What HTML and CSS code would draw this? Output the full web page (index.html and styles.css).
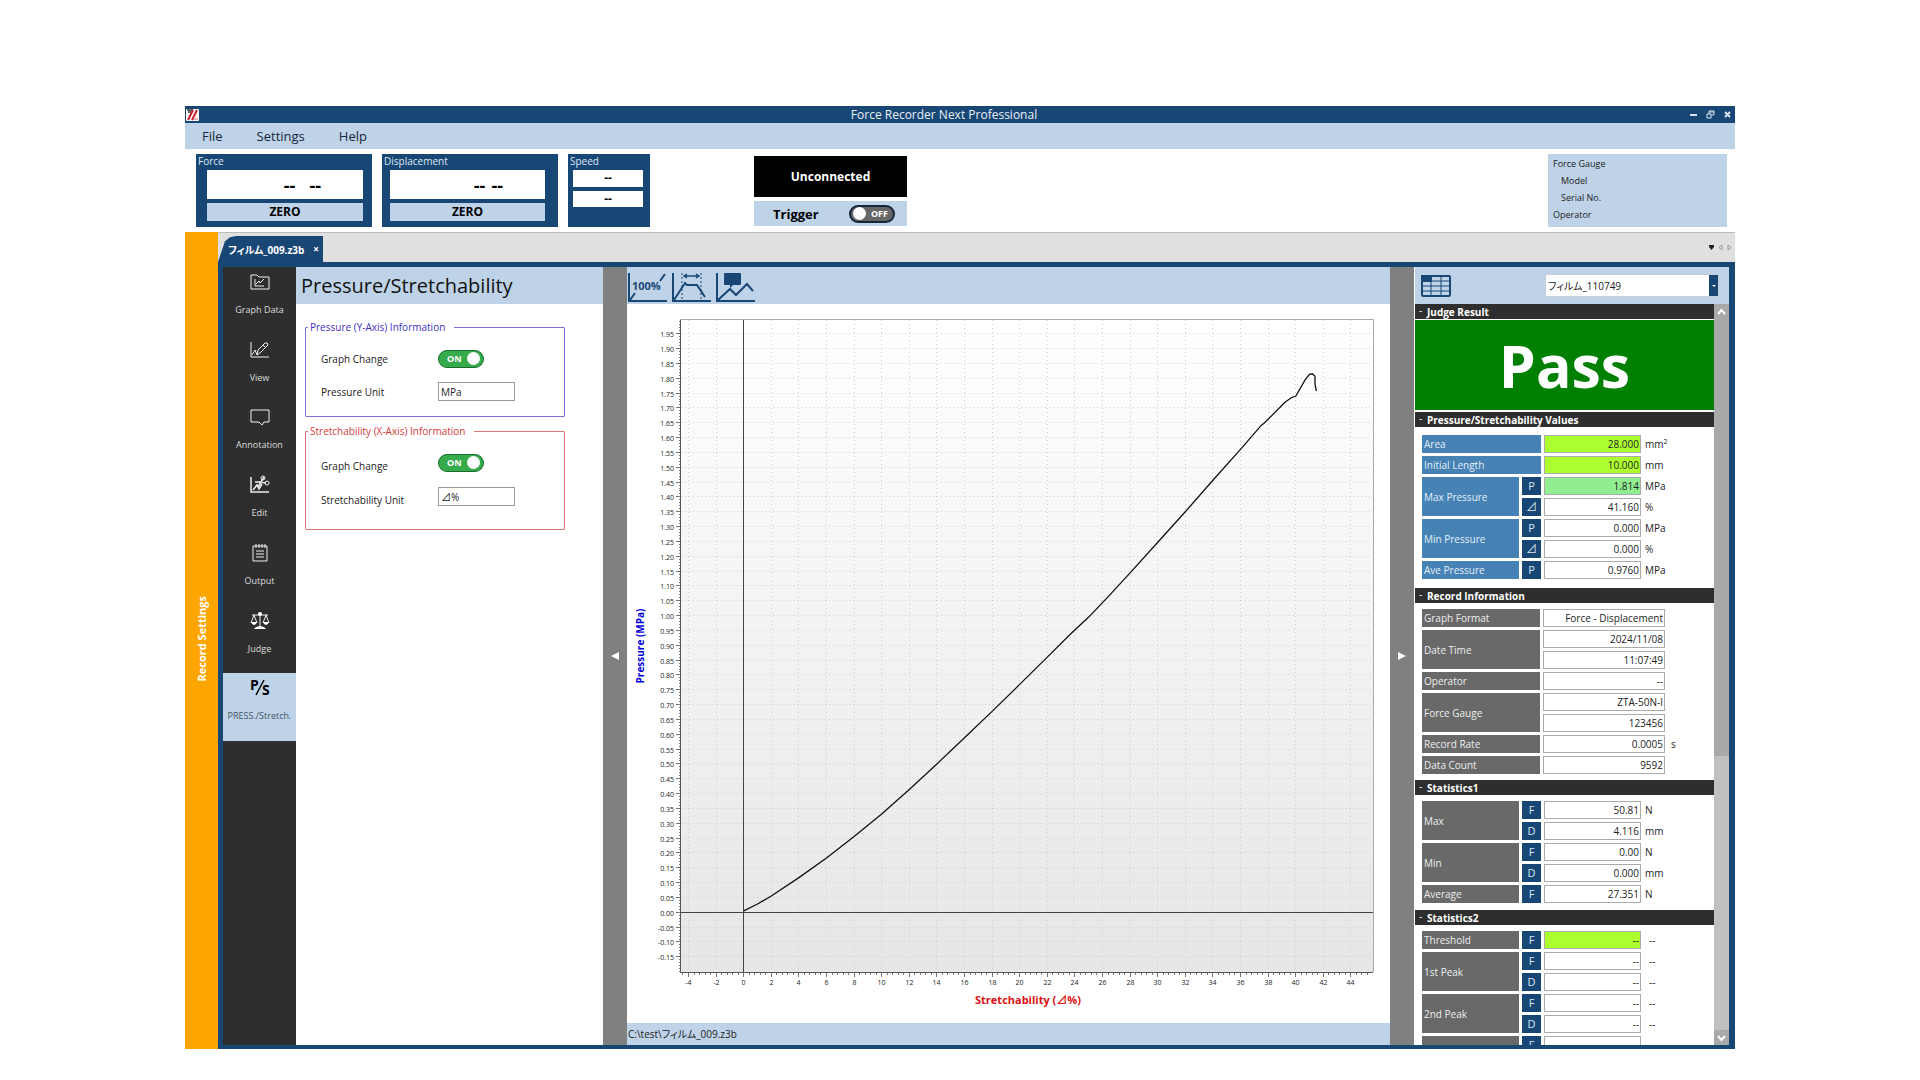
FILE: index.html
```
<!DOCTYPE html>
<html lang="en">
<head>
    <meta charset="UTF-8">
    <meta name="viewport" content="width=device-width, initial-scale=1.0">
    <title>Force Recorder Next Professional</title>
    <link rel="stylesheet" href="styles.css">
</head>
<body>
<div class="window">
    <header class="titlebar">
        <svg class="app-logo" viewBox="0 0 13 12"><rect width="13" height="12" rx="1" fill="#fff"/><path d="M1 1h6M2 3h3" stroke="#333" stroke-width="1.5"/><path d="M7 1L2 11M11 1L6 11" stroke="#c8202c" stroke-width="2"/><path d="M7 10h5" stroke="#d66" stroke-width="1"/></svg>
        <h1>Force Recorder Next Professional</h1>
        <div class="window-buttons">
            <button aria-label="Minimize"><svg viewBox="0 0 9 9"><path d="M1 5h7" stroke-width="2"/></svg></button>
            <button aria-label="Restore"><svg viewBox="0 0 9 9"><path d="M1 4h4v4H1zM3 4V1h5v4H5M3 2h5"/></svg></button>
            <button aria-label="Close"><svg viewBox="0 0 9 9"><path d="M2 2l5 5M7 2L2 7" stroke-width="2"/></svg></button>
        </div>
    </header>

    <nav class="menubar">
        <button>File</button>
        <button>Settings</button>
        <button>Help</button>
    </nav>

    <div class="meters">
        <div class="meter">
            <span class="meter-title">Force</span>
            <div class="meter-value"><span>--</span><span>--</span></div>
            <button class="zero">ZERO</button>
        </div>
        <div class="meter displacement">
            <span class="meter-title">Displacement</span>
            <div class="meter-value"><span>--</span><span>--</span></div>
            <button class="zero">ZERO</button>
        </div>
        <div class="meter speed">
            <span class="meter-title">Speed</span>
            <div class="speed-value">--</div>
            <div class="speed-value">--</div>
        </div>
        <div class="connection">
            <div class="status">Unconnected</div>
            <div class="trigger">
                <label for="trigger">Trigger</label>
                <span class="switch off"><input type="checkbox" id="trigger"><span class="knob"></span><span>OFF</span></span>
            </div>
        </div>
        <dl class="gauge">
            <dt>Force Gauge</dt>
            <dd>Model</dd>
            <dd>Serial No.</dd>
            <dt>Operator</dt>
        </dl>
    </div>

    <div class="workspace">
        <button class="record-settings"><span>Record Settings</span></button>
        <div class="document">
            <div class="tabs">
                <div class="tab"><span>フィルム_009.z3b</span><button aria-label="Close tab">×</button></div>
                <div class="tab-arrows">
                    <svg viewBox="0 0 24 8"><path d="M1 2h5v2L3.500 7 1 4z" fill="#222"/><path d="M14 2v5l-3-2.500zM20 2v5l3-2.500z" fill="none" stroke="#999"/></svg>
                </div>
            </div>

            <div class="panes">
                <nav class="sidebar">
                    <button>
                        <svg viewBox="0 0 20 20"><path d="M1 17V3h6l2 2h10v12z"/><path d="M5 7v7h9M6 12l3-3 1 2 4-4"/></svg>
                        <span>Graph Data</span>
                    </button>
                    <button>
                        <svg viewBox="0 0 20 20"><path d="M1 2v15h18M2 15l3-5 2 5M7 15l1-5 7-7q3-1 3 2l-7 7zM13 5l3 3"/></svg>
                        <span>View</span>
                    </button>
                    <button>
                        <svg viewBox="0 0 20 20"><path d="M1 3h18v12h-5l-2 3-3-3H1z"/></svg>
                        <span>Annotation</span>
                    </button>
                    <button>
                        <svg viewBox="0 0 20 20"><path d="M1 2v15h18M3 15l4-5 2 4 3-5M5 7h5l6 1M8 12l6-10" stroke-width="1.5"/><circle cx="13" cy="3" r="2"/><circle cx="17" cy="8" r="2"/></svg>
                        <span>Edit</span>
                    </button>
                    <button>
                        <svg viewBox="0 0 20 20"><path d="M3 3h14v15H3zM6 1v4M9 1v4M12 1v4M15 1v4M6 8h8M6 11h8M6 14h8"/></svg>
                        <span>Output</span>
                    </button>
                    <button>
                        <svg viewBox="0 0 20 20"><path d="M10 1v15M2 4h16M4 4l-3 8M4 4l3 8M16 4l-3 8M16 4l3 8"/><path d="M1 11h6q-1 3-3 3t-3-3zM13 11h6q-1 3-3 3t-3-3zM4 18q1-2 6-3 5 1 6 3z" fill="#fff" stroke="none"/><circle cx="10" cy="3" r="2" fill="#fff" stroke="none"/></svg>
                        <span>Judge</span>
                    </button>
                    <button class="active">
                        <svg viewBox="0 0 20 20"><text x="0" y="12">P</text><text x="12" y="17">S</text><path d="M14 2L6 17"/></svg>
                        <span>PRESS./Stretch.</span>
                    </button>
                </nav>

                <section class="settings">
                    <h2>Pressure/Stretchability</h2>
                    <div class="groups">
                        <fieldset class="pressure">
                            <legend>Pressure (Y-Axis) Information</legend>
                            <div class="field">
                                <label for="pChange">Graph Change</label>
                                <span class="switch"><input type="checkbox" id="pChange" checked><span>ON</span><span class="knob"></span></span>
                            </div>
                            <div class="field">
                                <label for="pUnit">Pressure Unit</label>
                                <input type="text" id="pUnit" value="MPa">
                            </div>
                        </fieldset>
                        <fieldset class="stretch">
                            <legend>Stretchability (X-Axis) Information</legend>
                            <div class="field">
                                <label for="sChange">Graph Change</label>
                                <span class="switch"><input type="checkbox" id="sChange" checked><span>ON</span><span class="knob"></span></span>
                            </div>
                            <div class="field">
                                <label for="sUnit">Stretchability Unit</label>
                                <input type="text" id="sUnit" value="⊿%">
                            </div>
                        </fieldset>
                    </div>
                </section>

                <button class="splitter" aria-label="Collapse settings"><svg viewBox="0 0 8 8"><path d="M8 0v8L0 4z"/></svg></button>

                <section class="graph">
                    <div class="graph-tools">
                        <button aria-label="Full scale">
                            <svg viewBox="0 0 40 31"><path d="M2 1v28h38M3 28l5-7M33 9l5-7"/><text x="5" y="18">100%</text></svg>
                        </button>
                        <button aria-label="Range">
                            <svg viewBox="0 0 40 31"><path d="M2 1v28h38M3 28L14 11l2 2h10l8 12"/><path d="M11 1v27M30 1v27" stroke-width="1" stroke-dasharray="2 2"/><path d="M13 4h15M16 2l-3 2 3 2M25 2l3 2-3 2" stroke-width="1.500"/></svg>
                        </button>
                        <button aria-label="Comment">
                            <svg viewBox="0 0 40 31"><path d="M2 1v28h38M3 28l12-11 6 6 11-11 6 7"/><path d="M10 1h15q1 0 1 1v10q0 1-1 1h-7l-3 3v-3h-5q-1 0-1-1V2q0-1 1-1z" fill="#194775" stroke="none"/></svg>
                        </button>
                    </div>
                    <svg class="chart" id="chart" viewBox="0 0 763 719">
                        <defs>
                            <linearGradient id="plotFill" x1="0" y1="0" x2="0" y2="1">
                                <stop offset="0" stop-color="#ffffff"/>
                                <stop offset="1" stop-color="#e6e6e6"/>
                            </linearGradient>
                        </defs>
                        <rect x="54" y="16" width="692" height="652" fill="url(#plotFill)"/>
                        <path id="gridLines" class="grid-lines"/>
                        <path class="frame" d="M54 15.500h692.500V668"/>
                        <path id="ticks" class="ticks"/>
                        <path class="axis" d="M53.500 15.500V668.500H746"/>
                        <path class="zero-line" d="M116.500 16V668M54 608.500H746"/>
                        <path id="curve" class="curve"/>
                        <g id="tickLabels" class="tick-labels"></g>
                        <text class="y-title" text-anchor="middle" transform="translate(17 342) rotate(-90)">Pressure (MPa)</text>
                        <text class="x-title" text-anchor="middle" x="401" y="700">Stretchability (⊿%)</text>
                    </svg>
                    <div class="path">C:\test\フィルム_009.z3b</div>
                </section>

                <button class="splitter" aria-label="Collapse results"><svg viewBox="0 0 8 8"><path d="M0 0v8l8-4z"/></svg></button>

                <aside class="results">
                    <div class="results-head">
                        <button class="table-button" aria-label="Table"><svg viewBox="0 0 30 22"><rect x="1" y="1" width="28" height="20" rx="1"/><path d="M1 6h28M1 11h28M1 16h28M10 1v20M20 1v20" stroke-width="1"/><path d="M1 1h9v5H1z" fill="#194775"/></svg></button>
                        <div class="combo">
                            <select aria-label="Record"><option>フィルム_110749</option></select>
                            <span class="combo-arrow"></span>
                        </div>
                    </div>
                    <div class="results-body">
                        <div class="sections">
                            <h3>Judge Result</h3>
                            <div class="judge">Pass</div>

                            <h3>Pressure/Stretchability Values</h3>
                            <table class="blue">
                                <tr><th colspan="2">Area</th><td class="lime">28.000</td><td class="unit">mm<sup>2</sup></td></tr>
                                <tr><th colspan="2">Initial Length</th><td class="lime">10.000</td><td class="unit">mm</td></tr>
                                <tr><th rowspan="2">Max Pressure</th><td class="key">P</td><td class="mint">1.814</td><td class="unit">MPa</td></tr>
                                <tr><td class="key">⊿</td><td>41.160</td><td class="unit">%</td></tr>
                                <tr><th rowspan="2">Min Pressure</th><td class="key">P</td><td>0.000</td><td class="unit">MPa</td></tr>
                                <tr><td class="key">⊿</td><td>0.000</td><td class="unit">%</td></tr>
                                <tr><th>Ave Pressure</th><td class="key">P</td><td>0.9760</td><td class="unit">MPa</td></tr>
                            </table>

                            <h3>Record Information</h3>
                            <table class="record">
                                <tr><th>Graph Format</th><td>Force - Displacement</td><td class="unit"></td></tr>
                                <tr><th rowspan="2">Date Time</th><td>2024/11/08</td><td class="unit"></td></tr>
                                <tr><td>11:07:49</td><td class="unit"></td></tr>
                                <tr><th>Operator</th><td>--</td><td class="unit"></td></tr>
                                <tr><th rowspan="2">Force Gauge</th><td>ZTA-50N-I</td><td class="unit"></td></tr>
                                <tr><td>123456</td><td class="unit"></td></tr>
                                <tr><th>Record Rate</th><td>0.0005</td><td class="unit">s</td></tr>
                                <tr><th>Data Count</th><td>9592</td><td class="unit"></td></tr>
                            </table>

                            <h3>Statistics1</h3>
                            <table>
                                <tr><th rowspan="2">Max</th><td class="key">F</td><td>50.81</td><td class="unit">N</td></tr>
                                <tr><td class="key">D</td><td>4.116</td><td class="unit">mm</td></tr>
                                <tr><th rowspan="2">Min</th><td class="key">F</td><td>0.00</td><td class="unit">N</td></tr>
                                <tr><td class="key">D</td><td>0.000</td><td class="unit">mm</td></tr>
                                <tr><th>Average</th><td class="key">F</td><td>27.351</td><td class="unit">N</td></tr>
                            </table>

                            <h3>Statistics2</h3>
                            <table class="peaks">
                                <tr><th>Threshold</th><td class="key">F</td><td class="lime">--</td><td class="unit">--</td></tr>
                                <tr><th rowspan="2">1st Peak</th><td class="key">F</td><td>--</td><td class="unit">--</td></tr>
                                <tr><td class="key">D</td><td>--</td><td class="unit">--</td></tr>
                                <tr><th rowspan="2">2nd Peak</th><td class="key">F</td><td>--</td><td class="unit">--</td></tr>
                                <tr><td class="key">D</td><td>--</td><td class="unit">--</td></tr>
                                <tr><th></th><td class="key">F</td><td></td><td class="unit"></td></tr>
                            </table>
                        </div>
                        <div class="scrollbar">
                            <button aria-label="Scroll up"><svg viewBox="0 0 9 8"><path d="M1 6l3.500-4L8 6"/></svg></button>
                            <div class="thumb"></div>
                            <button aria-label="Scroll down"><svg viewBox="0 0 9 8"><path d="M1 2l3.500 4L8 2"/></svg></button>
                        </div>
                    </div>
                </aside>
            </div>
        </div>
    </div>
</div>
<script src="script.js"></script>
</body>
</html>
```
FILE: styles.css
```
* {
    box-sizing: border-box;
}
body {
    margin: 0;
    padding: 106px 185px 31px;
    background: #ffffff;
    color: #222;
    font-family: "Open Sans", "Noto Sans CJK JP", sans-serif;
    font-size: 10px;
    font-feature-settings: "palt";
}
button, input, select {
    font: inherit;
    font-feature-settings: inherit;
    color: inherit;
    border: none;
    padding: 0;
    margin: 0;
    background: none;
}
h1, h2, h3, dl, dd, fieldset {
    margin: 0;
    padding: 0;
}
svg {
    display: block;
    fill: none;
}
.window {
    display: flex;
    flex-direction: column;
    height: calc(100vh - 137px);
}

/* title + menu */
.titlebar {
    display: grid;
    grid-template-columns: 14px 1fr 46px;
    align-items: center;
    height: 17px;
    background: #194775;
    color: #e8f0f8;
}
.app-logo {
    width: 13px;
    height: 12px;
    margin-left: 1px;
}
.titlebar h1 {
    font-size: 12px;
    font-weight: normal;
    line-height: 17px;
    text-align: center;
}
.window-buttons {
    display: flex;
    justify-content: flex-end;
    gap: 8px;
    padding-right: 3px;
}
.window-buttons svg {
    width: 9px;
    height: 9px;
    stroke: #d5e2ef;
}
.menubar {
    display: flex;
    gap: 34px;
    height: 26px;
    padding-left: 17px;
    background: #bfd3e8;
    font-size: 13px;
    color: #16263a;
}

/* meters */
.meters {
    display: flex;
    gap: 10px;
    height: 83px;
    padding: 5px 8px 5px 11px;
}
.meter {
    display: flex;
    flex-direction: column;
    gap: 4px;
    width: 176px;
    padding: 0 9px 6px 11px;
    background: #194775;
}
.meter-title {
    height: 12px;
    margin-left: -9px;
    line-height: 15px;
    color: #dce8f4;
}
.meter-value {
    display: flex;
    gap: 14px;
    justify-content: flex-end;
    align-items: center;
    flex: 1;
    padding-right: 42px;
    background: #fff;
    color: #000;
    font-size: 18px;
    font-weight: bold;
    line-height: 20px;
}
.displacement {
    padding: 0 13px 6px 8px;
}
.displacement .meter-title {
    margin-left: -6px;
}
.displacement .meter-value {
    gap: 6px;
}
.zero {
    height: 18px;
    background: #bfd3e8;
    color: #000;
    font-size: 12px;
    font-weight: bold;
    line-height: 18px;
}
.speed {
    width: 82px;
    padding: 0 7px 20px 5px;
}
.speed .meter-title {
    margin-left: -3px;
}
.speed-value {
    flex: 1;
    background: #fff;
    color: #000;
    font-size: 12px;
    font-weight: bold;
    line-height: 15px;
    text-align: center;
}
.connection {
    display: flex;
    flex-direction: column;
    gap: 4px;
    width: 153px;
    margin-left: 94px;
    padding-top: 2px;
    font-weight: bold;
}
.status {
    height: 41px;
    background: #000;
    color: #fff;
    font-size: 12px;
    line-height: 42px;
    text-align: center;
}
.trigger {
    display: flex;
    justify-content: space-between;
    align-items: center;
    height: 25px;
    padding: 0 12px 0 19px;
    background: #bfd3e8;
    color: #000;
    font-size: 13px;
}
.switch {
    position: relative;
    display: flex;
    justify-content: space-between;
    align-items: center;
    width: 46px;
    height: 18px;
    padding: 0 3px 0 8px;
    border: 1px solid #1c6b34;
    border-radius: 9px;
    background: #35ac49;
    color: #fff;
    font-size: 9px;
    font-weight: bold;
}
.switch.off {
    padding: 0 5px 0 2px;
    border: 2px solid #16263a;
    background: #666;
}
.switch input {
    position: absolute;
    inset: 0;
    opacity: 0;
}
.knob {
    width: 13px;
    height: 13px;
    border-radius: 50%;
    background: #fff;
}
.gauge {
    width: 179px;
    margin-left: auto;
    padding: 1px 5px;
    background: #bfd3e8;
    font-size: 9px;
    line-height: 17px;
}
.gauge dd {
    padding-left: 8px;
}

/* workspace */
.workspace {
    display: flex;
    flex: 1;
    min-height: 0;
}
.record-settings {
    width: 33px;
    background: #ffa500;
    color: #fff;
    font-size: 11px;
    font-weight: bold;
}
.record-settings span {
    display: inline-block;
    writing-mode: vertical-rl;
    transform: rotate(180deg);
}
.document {
    display: flex;
    flex-direction: column;
    flex: 1;
    min-width: 0;
}
.tabs {
    display: flex;
    justify-content: space-between;
    align-items: flex-end;
    height: 30px;
    border-top: 1px solid #bbb;
    background: #e0e0e0;
}
.tab {
    display: flex;
    align-items: center;
    justify-content: space-between;
    width: 105px;
    height: 26px;
    padding: 0 4px 0 10px;
    background: #194775;
    clip-path: polygon(0 100%, 7px 20%, 12px 5%, 18px 0, 100% 0, 100% 100%);
    color: #fff;
    font-weight: bold;
}
.tab-arrows {
    width: 24px;
    margin: 0 3px 11px 0;
}
.panes {
    display: flex;
    flex: 1;
    min-height: 0;
    padding: 5px 6px 4px 5px;
    background: #194775;
}
.sidebar {
    display: grid;
    grid-template-rows: repeat(7, 1fr) calc(100% - 474px);
    width: 73px;
    background: #2e2e2e;
    color: #ddd;
    font-size: 9px;
}
.sidebar button {
    display: flex;
    flex-direction: column;
    align-items: center;
    gap: 12px;
    padding-top: 5px;
    line-height: 12px;
}
.sidebar svg {
    width: 20px;
    height: 20px;
    stroke: #eee;
}
.sidebar .active {
    background: #bfd3e8;
    color: #445566;
}
.active svg {
    stroke: #000;
    stroke-width: 1.5;
    overflow: visible;
}
.active text {
    fill: #000;
    stroke: none;
    font-size: 14px;
    font-weight: bold;
}
.settings {
    flex: 0 0 307px;
    background: #fff;
}
.settings h2, .graph-tools, .results-head {
    height: 37px;
    background: #bfd3e8;
}
.settings h2 {
    padding-left: 5px;
    color: #111;
    font-size: 20px;
    font-weight: normal;
    line-height: 38px;
}
.groups {
    display: flex;
    flex-direction: column;
    gap: 6px;
    padding: 15px 38px 0 9px;
}
fieldset {
    display: flex;
    flex-direction: column;
    border: 1px solid #7b74d8;
    border-radius: 1px;
}
legend {
    margin-left: 2px;
    padding: 0 9px 0 2px;
    line-height: 16px;
}
.pressure {
    height: 98px;
    color: #3f2fc0;
}
.stretch {
    height: 107px;
    border-color: #dd7777;
    color: #d83a3a;
}
.field {
    display: flex;
    align-items: center;
    height: 33px;
    padding-left: 15px;
    color: #222;
}
.field:first-of-type {
    margin-top: 7px;
}
.field label {
    width: 117px;
}
.stretch .field label {
    padding-top: 6px;
}
.field input[type=text] {
    width: 77px;
    height: 19px;
    padding: 0 2px;
    border: 1px solid #999;
    background: #fff;
    color: #222;
}
.stretch .field:first-of-type {
    height: 35px;
    margin-top: 6px;
}
.splitter {
    display: flex;
    flex: 0 0 24px;
    align-items: center;
    justify-content: center;
    background: #808080;
}
.splitter svg {
    width: 8px;
    height: 8px;
    fill: #fff;
}

/* graph */
.graph {
    display: flex;
    flex: 1;
    flex-direction: column;
    min-width: 0;
    background: #fff;
}
.graph-tools {
    display: flex;
    gap: 4px;
    padding: 3px 0 0;
}
.graph-tools svg {
    width: 40px;
    height: 31px;
    stroke: #194775;
    stroke-width: 2;
}
.graph-tools text {
    fill: #194775;
    stroke: none;
    font-size: 11px;
    font-weight: bold;
}
.chart {
    flex: 1;
    width: 100%;
    min-height: 0;
}
.grid-lines {
    stroke: #d0d0d0;
    stroke-dasharray: 1 3;
}
.frame {
    stroke: #aaa;
}
.ticks {
    stroke: #777;
}
.axis {
    stroke: #555;
}
.zero-line {
    stroke: #444;
}
.curve {
    stroke: #111;
    stroke-width: 1.3;
}
.tick-labels {
    fill: #222;
    font-size: 7px;
}
.y-title {
    fill: #0000dd;
    font-size: 10px;
    font-weight: bold;
}
.x-title {
    fill: #dd1111;
    font-size: 11px;
    font-weight: bold;
}
.path {
    height: 22px;
    padding-left: 1px;
    background: #bfd3e8;
    line-height: 22px;
}

/* results */
.results {
    display: flex;
    flex: 0 0 315px;
    flex-direction: column;
    padding-left: 1px;
    background: #fff;
}
.results-head {
    display: flex;
    flex: none;
    align-items: center;
    justify-content: space-between;
    padding: 0 10px 0 6px;
}
.table-button svg {
    width: 30px;
    height: 22px;
    stroke: #194775;
    stroke-width: 2;
}
.combo {
    display: flex;
    width: 174px;
    height: 23px;
    border: 1px solid #c4ccd4;
    background: #fff;
}
.combo select {
    flex: 1;
    padding-left: 2px;
    appearance: none;
}
.combo-arrow {
    display: flex;
    align-items: center;
    justify-content: center;
    width: 9px;
    background: #194775;
}
.combo-arrow::after {
    content: "";
    border: 2px solid transparent;
    border-top-color: #fff;
    border-bottom: none;
}
.results-body {
    display: flex;
    flex: 1;
    min-height: 0;
}
.sections {
    flex: 1;
    overflow: hidden;
}
.sections h3 {
    height: 15px;
    padding-left: 12px;
    background: #2e2e2e;
    color: #fff;
    font-size: 10px;
    line-height: 17px;
}
.sections h3::before {
    content: "-";
    float: left;
    margin-left: -8px;
    font-weight: normal;
    line-height: 12px;
}
.judge {
    height: 90px;
    margin: 1px 0 2px;
    background: #008000;
    color: #fff;
    font-size: 59px;
    font-weight: bold;
    line-height: 90px;
    text-align: center;
}
table {
    width: 290px;
    margin: 3px 0 4px 4px;
    table-layout: auto;
    border-spacing: 3px;
}
table.blue {
    margin: 5px 0 6px 4px;
}
table.record {
    margin-bottom: 3px;
}
tr {
    height: 18px;
}
th, td {
    padding: 0 2px;
    line-height: 16px;
    white-space: nowrap;
}
th {
    width: 97px;
    background: #696969;
    color: #eee;
    font-weight: normal;
    text-align: left;
}
.blue th {
    background: #4682b4;
    color: #e4eff8;
}
td {
    width: 97px;
    padding: 0 1px;
    border: 1px solid #aaa;
    text-align: right;
}
.key {
    width: 19px;
    border: none;
    background: #194775;
    color: #dce8f4;
    font-size: 11px;
    text-align: center;
}
.unit {
    width: auto;
    border: none;
    text-align: left;
}
.peaks .unit {
    padding-left: 5px;
}
.record th {
    width: 118px;
}
.record td {
    width: 122px;
}
.record .unit {
    width: auto;
    padding-left: 3px;
}
sup {
    font-size: 7px;
    line-height: 0;
}
.lime {
    background: #adff2f;
}
.mint {
    background: #90ee90;
}
.scrollbar {
    display: flex;
    flex-direction: column;
    width: 15px;
    background: #c0c0c0;
}
.scrollbar button {
    display: flex;
    flex: 0 0 15px;
    align-items: center;
    justify-content: center;
    background: #a9a9a9;
}
.scrollbar svg {
    width: 9px;
    height: 8px;
    stroke: #fff;
    stroke-width: 2;
}
.thumb {
    height: 59%;
    margin-bottom: auto;
    background: #a9a9a9;
}
```
FILE: script.js
```
// measured samples: [stretch %, pressure MPa]
const samples = [
    [0, 0.005], [1, 0.028], [2, 0.055], [4, 0.117], [6, 0.183], [8, 0.255], [10, 0.331],
    [12, 0.414], [14, 0.5], [16, 0.588], [18, 0.677], [20, 0.768], [22, 0.86],
    [23.7, 0.939], [25, 0.995], [26.4, 1.063], [28, 1.144], [30.2, 1.257], [32, 1.35],
    [34, 1.456], [36, 1.56], [37.5, 1.641], [37.7, 1.648], [39.2, 1.718], [39.7, 1.735],
    [40, 1.739], [40.7, 1.796], [41, 1.813], [41.2, 1.815], [41.4, 1.807], [41.4, 1.78], [41.5, 1.757]
];
const left = 54, right = 746, top_ = 16, bottom = 668;
const toX = v => 116.7 + v * 13.8;
const toY = v => 608.3 - v * 296.7;
const snap = v => Math.floor(v) + 0.5;

let grid = "";
let ticks = "";
const labels = document.getElementById("tickLabels");

function addLabel(text, x, y, anchor) {
    const el = document.createElementNS("http://www.w3.org/2000/svg", "text");
    el.setAttribute("x", x);
    el.setAttribute("y", y);
    el.setAttribute("text-anchor", anchor);
    el.textContent = text;
    labels.appendChild(el);
}

// y axis, one minor tick per 0.01
for (let i = -20; i <= 199; i++) {
    const y = snap(toY(i / 100));
    if (i % 5 === 0 && i > -20) {
        grid += `M${left} ${y}H${right}`;
        ticks += `M${left - 5} ${y}H${left}`;
        addLabel((i / 100).toFixed(2), left - 7, y + 3, "end");
    } else {
        ticks += `M${left - 2} ${y}H${left}`;
    }
}
// x axis, five minor ticks per label
for (let i = -11; i <= 113; i++) {
    const v = i * 0.4;
    const x = snap(toX(v));
    if (i % 5 === 0) {
        grid += `M${x} ${top_}V${bottom}`;
        ticks += `M${x} ${bottom}V${bottom + 5}`;
        addLabel(Math.round(v), x, bottom + 13, "middle");
    } else {
        ticks += `M${x} ${bottom}V${bottom + 3}`;
    }
}
document.getElementById("gridLines").setAttribute("d", grid);
document.getElementById("ticks").setAttribute("d", ticks);
document.getElementById("curve").setAttribute("d", "M" + samples.map(p => toX(p[0]).toFixed(1) + " " + toY(p[1]).toFixed(1)).join("L"));
```
